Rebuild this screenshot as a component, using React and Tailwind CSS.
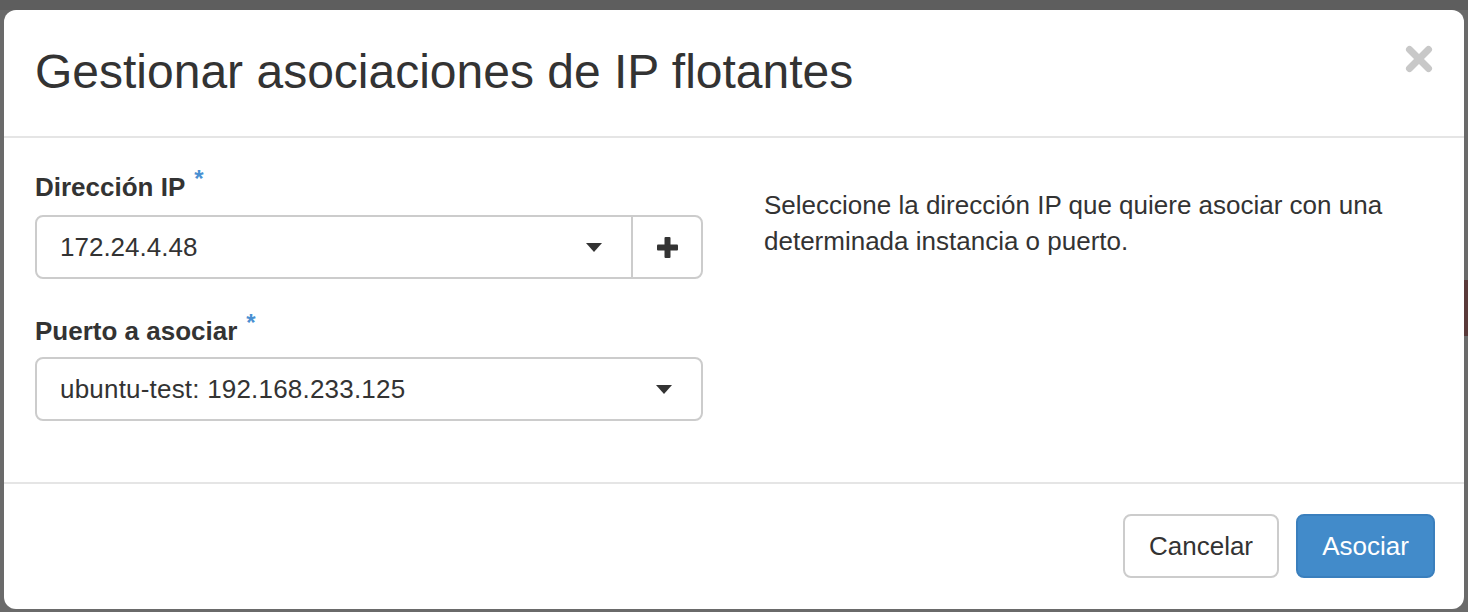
import React from "react";

const font = { fontFamily: '"Liberation Sans", Arial, sans-serif' };

const Caret = () => (
  <svg width="16" height="9" viewBox="0 0 16 9" className="shrink-0">
    <path d="M0 0 L16 0 L8 9 Z" fill="#333" />
  </svg>
);

const Plus = () => (
  <svg width="21" height="21" viewBox="0 0 21 21">
    <rect x="7.5" y="0" width="6" height="21" rx="1" fill="#333" />
    <rect x="0" y="7.5" width="21" height="6" rx="1" fill="#333" />
  </svg>
);

const CloseX = () => (
  <svg width="28" height="28" viewBox="0 0 28 28">
    <g stroke="#c8c8c8" strokeWidth="7" strokeLinecap="round">
      <line x1="4.5" y1="4.5" x2="23.5" y2="23.5" />
      <line x1="23.5" y1="4.5" x2="4.5" y2="23.5" />
    </g>
  </svg>
);

const Label = ({ children }) => (
  <div className="flex items-start h-[40px]">
    <span className="text-[26px] font-bold text-[#333] leading-[40px]">{children}</span>
    <span className="ml-[9px] text-[24px] font-bold text-[#4a90d2] leading-[24px] mt-[0px]">*</span>
  </div>
);

export default function App() {
  return (
    <div className="relative w-full h-[612px] bg-[#6a6a6a] overflow-hidden" style={font}>
      {/* backdrop bits */}
      <div className="absolute top-0 left-0 right-0 h-[10px] bg-[#5e5e5e]" />
      <div className="absolute right-0 top-[280px] w-[4px] h-[56px] bg-[#5a3a3a]" />

      <div className="relative ml-[4px] mt-[10px] w-[1460px] h-[599px] bg-white rounded-[12px] flex flex-col">
        {/* header */}
        <div className="h-[128px] shrink-0 flex items-center justify-between pl-[31px] pr-[31px] border-b-2 border-[#e5e5e5]">
          <h4 className="text-[48px] text-[#333] leading-none -mt-[2px]">
            Gestionar asociaciones de IP flotantes
          </h4>
          <div className="self-start mt-[35px]">
            <CloseX />
          </div>
        </div>

        {/* body */}
        <div className="h-[346px] shrink-0 flex pl-[31px] pr-[31px] border-b-2 border-[#e5e5e5]">
          <div className="w-[668px] pt-[29px]">
            <Label>Dirección IP</Label>
            <div className="mt-[8px] h-[64px] flex border-2 border-[#ccc] rounded-[8px]">
              <div className="flex-1 flex items-center justify-between pl-[23px] pr-[29px]">
                <span className="text-[26px] text-[#333]">172.24.4.48</span>
                <Caret />
              </div>
              <div className="w-[70px] border-l-2 border-[#ccc] flex items-center justify-center">
                <Plus />
              </div>
            </div>

            <div className="mt-[32px]">
              <Label>Puerto a asociar</Label>
            </div>
            <div className="mt-[6px] h-[64px] flex items-center justify-between border-2 border-[#ccc] rounded-[8px] pl-[23px] pr-[29px]">
              <span className="text-[26px] text-[#333] tracking-[0.2px]">ubuntu-test: 192.168.233.125</span>
              <Caret />
            </div>
          </div>

          <div className="ml-[61px] pt-[49px] w-[660px]">
            <p className="text-[26px] leading-[36px] text-[#333]">
              Seleccione la dirección IP que quiere asociar con una determinada instancia o puerto.
            </p>
          </div>
        </div>

        {/* footer */}
        <div className="flex-1 flex items-center justify-end gap-[17px] pr-[29px] pb-[1px]">
          <button className="h-[64px] w-[156px] rounded-[8px] border-2 border-[#ccc] bg-white text-[26px] text-[#333]">
            Cancelar
          </button>
          <button className="h-[64px] w-[139px] rounded-[8px] border-2 border-[#3a7fbd] bg-[#428bca] text-[26px] text-white">
            Asociar
          </button>
        </div>
      </div>
    </div>
  );
}
